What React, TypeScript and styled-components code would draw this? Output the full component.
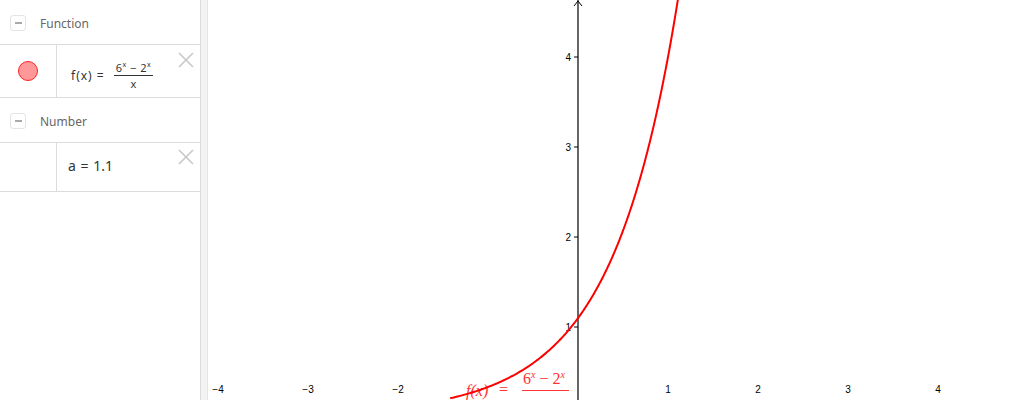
import styled, { createGlobalStyle } from 'styled-components'

const GlobalStyle = createGlobalStyle`
  html, body {
    margin: 0;
    padding: 0;
    background: #fff;
    overflow: hidden;
  }
  body {
    font-family: 'Noto Sans', 'Open Sans', sans-serif;
  }
`

const Page = styled.div`
  display: flex;
  width: 1024px;
  height: 400px;
  overflow: hidden;
`

const Panel = styled.div`
  width: 200px;
  flex-shrink: 0;
  display: flex;
  flex-direction: column;
  background: #fff;
`

const Header = styled.div`
  height: 45px;
  border-bottom: 1px solid #dcdcdc;
  display: flex;
  align-items: center;
  gap: 14px;
  padding-left: 10px;
  padding-top: 2px;
  box-sizing: border-box;
  color: #666;
  font-size: 12px;
`

const Toggle = styled.div`
  width: 14px;
  height: 14px;
  border: 1px solid #e4e4e4;
  border-radius: 3px;
  display: grid;
  place-items: center;

  &::after {
    content: '';
    width: 7px;
    height: 1.5px;
    background: #aaa;
  }
`

const Item = styled.div<{ $h: number }>`
  height: ${(p) => p.$h}px;
  border-bottom: 1px solid #dcdcdc;
  display: flex;
  position: relative;
`

const Marble = styled.div`
  width: 56px;
  flex-shrink: 0;
  border-right: 1px solid #dcdcdc;
  display: grid;
  place-items: center;
`

const Dot = styled.div`
  width: 18px;
  height: 18px;
  border-radius: 50%;
  background: #ff9999;
  border: 1px solid #f22;
`

const Formula = styled.div`
  display: flex;
  align-items: center;
  padding-left: 14px;
  color: #333;
  font-size: 12px;
  gap: 9px;
  margin-top: 8px;
`

const Fn = styled.span`
  letter-spacing: 1px;
`

const Frac = styled.div`
  display: flex;
  flex-direction: column;
  align-items: center;
  font-size: 11px;
  line-height: 11px;
`

const Num = styled.span`
  border-bottom: 1px solid #333;
  padding: 0 2px 2px;
  letter-spacing: 0.5px;
`

const Den = styled.span`
  padding-top: 2px;
`

const Sup = styled.sup`
  font-size: 7px;
  line-height: 0;
  vertical-align: 5px;
`

const Value = styled.div`
  display: flex;
  align-items: center;
  padding-left: 11px;
  color: #333;
  font-size: 14px;
  word-spacing: 1px;
  margin-top: -3px;
`

const Close = styled.svg<{ $top: number }>`
  position: absolute;
  right: 6px;
  top: ${(p) => p.$top}px;
`

const Splitter = styled.div`
  width: 6px;
  flex-shrink: 0;
  background: #f3f3f3;
  border-left: 1px solid #dcdcdc;
  border-right: 1px solid #e4e4e4;
`

const Graph = styled.div`
  flex: 1;
  position: relative;
  background: #fff;
`

const Canvas = styled.svg`
  display: block;
  width: 100%;
  height: 100%;
`

const CloseIcon = ({ top }: { top: number }) => (
  <Close $top={top} width="16" height="16" viewBox="0 0 16 16">
    <path d="M1 1 L15 15 M15 1 L1 15" stroke="#c8c8c8" strokeWidth="1.6" />
  </Close>
)

// graph coordinates relative to the graphics view (starts at x=208)
const OX = 370
const OY = 417
const U = 90

const f = (x: number) => (Math.abs(x) < 1e-9 ? Math.log(3) : (Math.pow(6, x) - Math.pow(2, x)) / x)

const curve = (() => {
  const pts: string[] = []
  for (let x = -1.42; x <= 1.16; x += 0.01) {
    const px = OX + x * U
    const py = OY - f(x) * U
    pts.push(`${px.toFixed(2)},${py.toFixed(2)}`)
  }
  return 'M' + pts.join(' L')
})()

const xTicks = [-4, -3, -2, 1, 2, 3, 4]
const yTicks = [1, 2, 3, 4]

const App = () => {
  return (
    <>
      <GlobalStyle />
      <Page>
        <Panel>
          <Header>
            <Toggle />
            <span>Function</span>
          </Header>
          <Item $h={52}>
            <Marble>
              <Dot />
            </Marble>
            <Formula>
              <Fn>f(x) =</Fn>
              <Frac>
                <Num>
                  6<Sup>x</Sup> − 2<Sup>x</Sup>
                </Num>
                <Den>x</Den>
              </Frac>
            </Formula>
            <CloseIcon top={7} />
          </Item>
          <Header>
            <Toggle />
            <span>Number</span>
          </Header>
          <Item $h={48}>
            <Marble />
            <Value>a = 1.1</Value>
            <CloseIcon top={6} />
          </Item>
        </Panel>
        <Splitter />
        <Graph>
          <Canvas>
            <line x1={OX} y1={0} x2={OX} y2={400} stroke="#000" strokeWidth="1.2" />
            <path d={`M${OX - 4} 6 L${OX} 1 L${OX + 4} 6`} stroke="#000" fill="none" strokeWidth="1" />
            {yTicks.map((t) => (
              <g key={t}>
                <line x1={OX - 4} y1={OY - t * U} x2={OX} y2={OY - t * U} stroke="#000" />
                <text
                  x={OX - 7}
                  y={OY - t * U + 4}
                  textAnchor="end"
                  fontSize="10"
                  fontFamily="'Liberation Sans', Arial, sans-serif"
                  fill="#000"
                >
                  {t}
                </text>
              </g>
            ))}
            {xTicks.map((t) => (
              <text
                key={t}
                x={OX + t * U}
                y={393}
                textAnchor="middle"
                fontSize="10"
                fontFamily="'Liberation Sans', Arial, sans-serif"
                fill="#000"
              >
                {t < 0 ? `−${-t}` : t}
              </text>
            ))}
            <g fill="#ff3333" fontFamily="'Liberation Serif', 'DejaVu Serif', serif">
              <text x={258} y={396} fontSize="16" fontStyle="italic">
                f(x)
              </text>
              <text x={291} y={395} fontSize="16">
                =
              </text>
              <text x={315} y={384} fontSize="16">
                6
                <tspan fontSize="10" fontStyle="italic" dy="-6">
                  x
                </tspan>
                <tspan dy="6"> − 2</tspan>
                <tspan fontSize="10" fontStyle="italic" dy="-6">
                  x
                </tspan>
              </text>
              <line x1={314} y1={390.5} x2={361} y2={390.5} stroke="#ff3333" strokeWidth="1" />
            </g>
            <path d={curve} stroke="#ff0000" strokeWidth="2" fill="none" />
          </Canvas>
        </Graph>
      </Page>
    </>
  )
}

export default App
